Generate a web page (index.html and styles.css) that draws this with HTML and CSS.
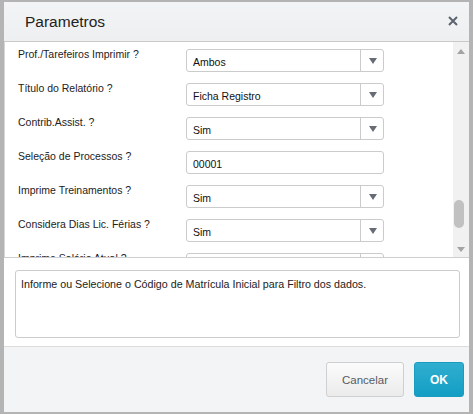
FILE: index.html
```html
<!DOCTYPE html>
<html lang="pt">
<head>
<meta charset="utf-8">
<title>Parametros</title>
<link rel="stylesheet" href="styles.css">
</head>
<body>
<div class="dialog">
  <div class="header">
    <span class="title">Parametros</span>
    <svg class="close" width="10" height="10" viewBox="0 0 10 10"><path d="M1 1 L9 9 M9 1 L1 9" stroke="#5d6470" stroke-width="2" fill="none"/></svg>
  </div>
  <div class="scroll">
    <div class="form">
      <div class="row"><span class="label">Prof./Tarefeiros Imprimir ?</span><div class="field select"><span class="value">Ambos</span><span class="btn"><span class="tri"></span></span></div></div>
      <div class="row"><span class="label">Título do Relatório ?</span><div class="field select"><span class="value">Ficha Registro</span><span class="btn"><span class="tri"></span></span></div></div>
      <div class="row"><span class="label">Contrib.Assist. ?</span><div class="field select"><span class="value">Sim</span><span class="btn"><span class="tri"></span></span></div></div>
      <div class="row"><span class="label">Seleção de Processos ?</span><div class="field"><span class="value">00001</span></div></div>
      <div class="row"><span class="label">Imprime Treinamentos ?</span><div class="field select"><span class="value">Sim</span><span class="btn"><span class="tri"></span></span></div></div>
      <div class="row"><span class="label">Considera Dias Lic. Férias ?</span><div class="field select"><span class="value">Sim</span><span class="btn"><span class="tri"></span></span></div></div>
      <div class="row"><span class="label">Imprime Salário Atual ?</span><div class="field select"><span class="value">Sim</span><span class="btn"><span class="tri"></span></span></div></div>
    </div>
    <div class="scrollbar">
      <span class="arrow up"></span>
      <span class="thumb"></span>
      <span class="arrow down"></span>
    </div>
  </div>
  <div class="panel">
    <div class="message">Informe ou Selecione o Código de Matrícula Inicial para Filtro dos dados.</div>
  </div>
  <div class="footer">
    <button class="button cancel">Cancelar</button>
    <button class="button ok">OK</button>
  </div>
</div>
</body>
</html>
```

FILE: styles.css
```css
html, body {
  margin: 0;
  padding: 0;
  height: 414px;
  overflow: hidden;
}
body {
  background: #b4b4b4;
  font-family: "Liberation Sans", Arial, sans-serif;
  color: #222;
}
.dialog {
  margin: 2px 4px 0 4px;
  height: 410px;
  background: #fff;
  display: flex;
  flex-direction: column;
  overflow: hidden;
}
.header {
  height: 39px;
  flex: none;
  background: linear-gradient(#f3f4f5, #eeeff0);
  border-bottom: 1px solid #c9c9c9;
  display: flex;
  align-items: center;
  justify-content: space-between;
  padding: 0 11px 0 21px;
}
.title {
  font-size: 15.5px;
  color: #222;
  margin-top: 1px;
}
.close {
  display: block;
  margin-top: -1px;
}
.scroll {
  height: 215px;
  flex: none;
  display: flex;
  border-bottom: 1px solid #cfcfcf;
  border-left: 1px solid #d6d6d6;
}
.form {
  flex: 1;
  overflow: hidden;
  padding-top: 2px;
}
.row {
  height: 34px;
  display: grid;
  grid-template-columns: 181px 198px;
  align-items: start;
}
.label {
  font-size: 10.5px;
  line-height: 14px;
  padding-top: 3px;
  padding-left: 13px;
  white-space: nowrap;
  color: #222;
}
.field {
  margin-top: 5px;
  height: 23px;
  box-sizing: border-box;
  border: 1px solid #cbcbcb;
  border-radius: 3px;
  display: flex;
  align-items: center;
  background: #fff;
}
.value {
  flex: 1;
  font-size: 10.5px;
  padding-left: 6px;
  color: #111;
  margin-top: 2px;
}
.btn {
  width: 22px;
  height: 100%;
  border-left: 1px solid #cbcbcb;
  display: flex;
  align-items: center;
  justify-content: center;
}
.tri {
  width: 0;
  height: 0;
  border-left: 4px solid transparent;
  border-right: 4px solid transparent;
  border-top: 6px solid #666b74;
  margin-left: 2px;
  margin-top: 1px;
}
.scrollbar {
  width: 16px;
  flex: none;
  background: #f1f1f1;
  position: relative;
}
.arrow {
  position: absolute;
  left: 4px;
  width: 0;
  height: 0;
  border-left: 4px solid transparent;
  border-right: 4px solid transparent;
}
.arrow.up {
  top: 7px;
  border-bottom: 5px solid #a3a3a3;
}
.arrow.down {
  bottom: 5px;
  border-top: 5px solid #a3a3a3;
}
.thumb {
  position: absolute;
  left: 1px;
  top: 158px;
  width: 10px;
  height: 28px;
  border-radius: 5px;
  background: #c1c1c1;
}
.panel {
  height: 88px;
  flex: none;
  box-sizing: border-box;
  padding: 12px 9px 0 11px;
}
.message {
  height: 68px;
  box-sizing: border-box;
  border: 1px solid #cbcbcb;
  border-radius: 3px;
  padding: 6px 5px;
  font-size: 10.7px;
  line-height: 14px;
  color: #222;
}
.footer {
  flex: 1;
  border-top: 1px solid #dcdcdc;
  background: #f3f4f5;
  display: flex;
  justify-content: flex-end;
  align-items: flex-start;
  gap: 10px;
  padding: 15px 5px 0 0;
}
.button {
  height: 35px;
  border-radius: 3px;
  font-family: "Liberation Sans", Arial, sans-serif;
  font-size: 11.5px;
  cursor: pointer;
}
.cancel {
  width: 78px;
  border: 1px solid #cfcfcf;
  background: linear-gradient(#fbfbfb, #ebebeb);
  color: #555b63;
}
.ok {
  width: 50px;
  border: 1px solid #1a9cc1;
  background: linear-gradient(#30aed0, #139ec4);
  color: #fff;
  font-weight: bold;
  font-size: 12px;
}
```
